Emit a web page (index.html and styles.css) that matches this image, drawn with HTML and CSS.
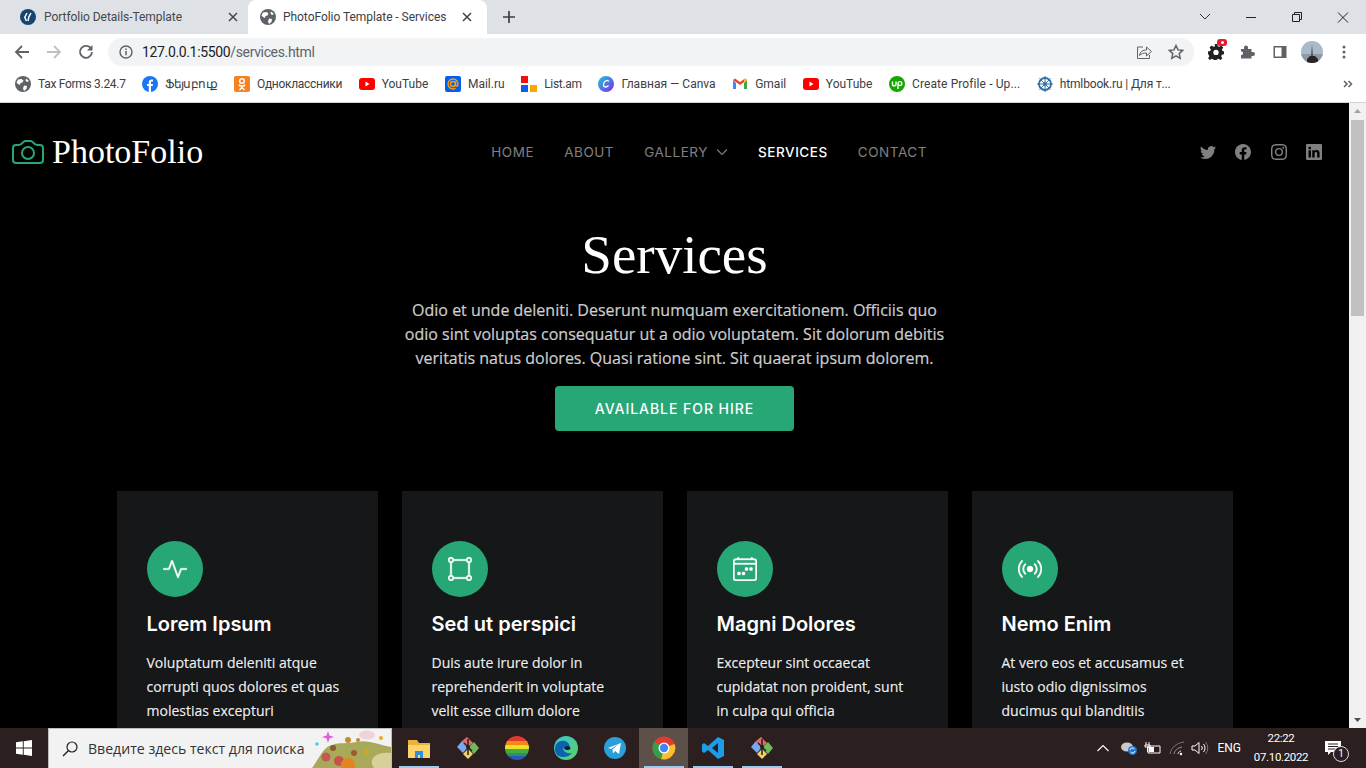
FILE: index.html
```html
<!DOCTYPE html>
<html lang="en">
<head>
<meta charset="utf-8">
<title>PhotoFolio Template - Services</title>
<link rel="stylesheet" href="styles.css">
</head>
<body>
<div class="screen">
  <div class="tabstrip">
    <div class="tab">
      <svg class="fav" viewBox="0 0 16 16"><circle cx="8" cy="8" r="8" fill="#14466f"/><path d="M7 4 4.800 8.200 6.400 12M11 4 8.800 8l-.8 4" fill="none" stroke="#fff" stroke-width="1.500"/></svg>
      <span class="tabtitle">Portfolio Details-Template</span>
      <svg class="tabx" viewBox="0 0 10 10"><path d="M1 1l8 8M9 1 1 9" stroke="#45474a" stroke-width="1.500"/></svg>
    </div>
    <div class="tab tab-active">
      <svg class="fav" viewBox="0 0 16 16"><circle cx="8" cy="8" r="8" fill="#5f6368"/><path d="M3 3.500 6.500 3l2 1.500-1 2-2 .5-.5 2L3 8 1.500 6.500zM9 9.500l3 .5-.5 3L9 15l-1-2.500zM11 2.500 14 5l-2 1-1.500-1.500z" fill="#fff"/></svg>
      <span class="tabtitle">PhotoFolio Template - Services</span>
      <svg class="tabx" viewBox="0 0 10 10"><path d="M1 1l8 8M9 1 1 9" stroke="#3c4043" stroke-width="1.500"/></svg>
    </div>
    <svg class="newtab" viewBox="0 0 12 12"><path d="M6 0v12M0 6h12" stroke="#3c4043" stroke-width="1.700"/></svg>
    <div class="winctrls">
      <svg class="winbtn" viewBox="0 0 46 14"><path d="M18 4l5 5 5-5" fill="none" stroke="#333" stroke-width="1"/></svg>
      <svg class="winbtn" viewBox="0 0 46 14"><path d="M18 7.500h10" stroke="#222" stroke-width="1"/></svg>
      <svg class="winbtn" viewBox="0 0 46 14"><path d="M18.500 4.500h7v7h-7zM20.500 4.500v-2h7v7h-2" fill="none" stroke="#222" stroke-width="1"/></svg>
      <svg class="winbtn" viewBox="0 0 46 14"><path d="M18 2.500l10 10M28 2.500l-10 10" stroke="#222" stroke-width="1"/></svg>
    </div>
  </div>

  <div class="toolbar">
    <svg class="tool" viewBox="0 0 16 16"><path d="M15 8H2M8 2 2 8l6 6" fill="none" stroke="#5f6368" stroke-width="1.800"/></svg>
    <svg class="tool" viewBox="0 0 16 16"><path d="M1 8h13M8 2l6 6-6 6" fill="none" stroke="#bdc1c6" stroke-width="1.800"/></svg>
    <svg class="tool" viewBox="0 0 16 16"><path d="M13.300 5A6 6 0 1 0 14 8" fill="none" stroke="#5f6368" stroke-width="1.800"/><path d="M14.500 1v5.500H9z" fill="#5f6368"/></svg>
    <div class="omnibox">
      <svg class="info" viewBox="0 0 14 14"><circle cx="7" cy="7" r="6" fill="none" stroke="#5f6368" stroke-width="1.400"/><path d="M7 6v4.200M7 3.500v1.500" stroke="#5f6368" stroke-width="1.500"/></svg>
      <span class="url"><span class="url-host">127.0.0.1:5500</span>/services.html</span>
      <svg class="omni-ic omni-share" viewBox="0 0 16 16"><path d="M7 3H1.500v11.500h12V11" fill="none" stroke="#5f6368" stroke-width="1"/><path d="M3.500 11.500C4 7.500 7 6 10.500 6V3l5 4.500-5 4.500V9C7.500 9 5.500 9.500 3.500 11.500Z" fill="#f1f3f4" stroke="#5f6368" stroke-width="1"/></svg>
      <svg class="omni-ic" viewBox="0 0 16 16"><path d="M8 1.500l2 4.400 4.800.5-3.600 3.200 1 4.700L8 11.900l-4.200 2.400 1-4.700L1.200 6.400 6 5.900z" fill="none" stroke="#5f6368" stroke-width="1.500"/></svg>
    </div>
    <div class="exts">
      <span class="ext">
        <svg class="ext-svg" viewBox="0 0 18 18"><path d="M7.500 0h3l.5 2.500 1.700.7L15 1.800l2.100 2.100-1.400 2.300.7 1.700L18 8.500v3l-2.500.5-.7 1.700 1.400 2.200-2.100 2.100-2.300-1.400-1.700.7-.5.700h-3l-.5-.7-1.700-.7-2.200 1.400L.1 15.900l1.400-2.200-.7-1.700L0 11.500v-3l2.500-.6.700-1.700L1.800 3.900 3.900 1.800l2.300 1.400 1.700-.7z" fill="#202124"/><circle cx="9" cy="9.500" r="3" fill="#fff"/></svg>
        <span class="ext-badge"><span class="ext-badge-dot"></span></span>
      </span>
      <svg class="ext-svg" viewBox="0 0 16 16"><path d="M1 6h3V4.500a2 2 0 0 1 4 0V6h3.500v3H13a2 2 0 0 1 0 4h-1.500v2.500H1V12h1a2 2 0 0 0 0-3.500H1z" fill="#5f6368" transform="translate(0 -1)"/></svg>
      <svg class="ext-svg" viewBox="0 0 16 16"><path d="M1.500 2h13v12h-13z" fill="#5f6368"/><path d="M3 3.500h6.500v9H3z" fill="#fff"/></svg>
      <svg class="avatar" viewBox="0 0 22 22"><defs><clipPath id="av"><circle cx="11" cy="11" r="11"/></clipPath></defs><g clip-path="url(#av)"><rect width="22" height="22" fill="#a9bac9"/><rect y="13" width="22" height="9" fill="#8d9aa5"/><path d="M11 3l1 12h-2z" fill="#555"/><path d="M6 22v-4l3-3h5l3 3v4z" fill="#2a2522"/></g></svg>
      <svg class="ext-svg" viewBox="0 0 16 16"><circle cx="8" cy="3" r="1.500" fill="#5f6368"/><circle cx="8" cy="8" r="1.500" fill="#5f6368"/><circle cx="8" cy="13" r="1.500" fill="#5f6368"/></svg>
    </div>
  </div>

  <div class="bookmarks">
    <a class="bm bm-tight"><svg class="fav" viewBox="0 0 16 16"><circle cx="8" cy="8" r="8" fill="#5f6368"/><path d="M3 3.500 6.500 3l2 1.500-1 2-2 .5-.5 2L3 8 1.500 6.500zM9 9.500l3 .5-.5 3L9 15l-1-2.500zM11 2.500 14 5l-2 1-1.500-1.500z" fill="#fff"/></svg>Tax Forms 3.24.7</a>
    <a class="bm bm-tighter"><svg class="fav" viewBox="0 0 16 16"><circle cx="8" cy="8" r="8" fill="#1a77f2"/><path d="M6.800 16V10H5V8h1.800V6.300C6.800 4.500 8 3.500 9.500 3.500c.7 0 1.500.1 1.500.1v1.800h-.9c-.9 0-1.100.5-1.100 1.100V8h2l-.3 2H9v6z" fill="#fff"/></svg>Ֆեյսբուք</a>
    <a class="bm bm-tight"><svg class="fav" viewBox="0 0 16 16"><rect width="16" height="16" rx="2" fill="#f58220"/><circle cx="8" cy="5" r="2.300" fill="none" stroke="#fff" stroke-width="1.500"/><path d="M4.800 9c2 1.300 4.400 1.300 6.400 0M8 10v1.500M5.500 14 8 11.500l2.500 2.500" fill="none" stroke="#fff" stroke-width="1.500"/></svg>Одноклассники</a>
    <a class="bm"><svg class="fav" viewBox="0 0 16 16"><rect y="2" width="16" height="12" rx="3" fill="#f00"/><path d="M6.500 5.500 10.500 8l-4 2.500z" fill="#fff"/></svg>YouTube</a>
    <a class="bm"><svg class="fav" viewBox="0 0 16 16"><rect width="16" height="16" rx="2" fill="#005ff9"/><circle cx="8" cy="8" r="2.500" fill="none" stroke="#ff9e00" stroke-width="1.400"/><path d="M10.500 5.500V9c0 1.700 2.500 1.700 2.500-.5A5 5 0 1 0 10.500 12.300" fill="none" stroke="#ff9e00" stroke-width="1.400"/></svg>Mail.ru</a>
    <a class="bm bm-tight"><svg class="fav" viewBox="0 0 16 16"><path d="M0 0h7v7H0z" fill="#f01010"/><path d="M0 9h7v7H0z" fill="#0e5bf0"/><path d="M9 9h7v7H9z" fill="#f9a800"/></svg>List.am</a>
    <a class="bm"><svg class="fav" viewBox="0 0 16 16"><defs><linearGradient id="cv" x1="0" y1="0" x2="1" y2="1"><stop offset="0" stop-color="#1fc8d8"/><stop offset="1" stop-color="#7d2ae8"/></linearGradient></defs><circle cx="8" cy="8" r="8" fill="url(#cv)"/><path d="M10.800 5.500C10 3.500 6 4.500 5.500 8.500c-.3 3 3 3.200 5 1" fill="none" stroke="#fff" stroke-width="1.300"/></svg>Главная — Canva</a>
    <a class="bm"><svg class="fav" viewBox="0 0 16 16"><path d="M1 4v9h3V7z" fill="#4285f4"/><path d="M12 7v6h3V4z" fill="#34a853"/><path d="M1 4l7 5 7-5-2-1.500L8 6 3 2.500z" fill="#ea4335"/><path d="M12 7l3-3-2-1.500-1 .7z" fill="#fbbc04"/></svg>Gmail</a>
    <a class="bm"><svg class="fav" viewBox="0 0 16 16"><rect y="2" width="16" height="12" rx="3" fill="#f00"/><path d="M6.500 5.500 10.500 8l-4 2.500z" fill="#fff"/></svg>YouTube</a>
    <a class="bm bm-wide"><svg class="fav" viewBox="0 0 16 16"><circle cx="8" cy="8" r="8" fill="#14a800"/><path d="M3.500 5.500V8c0 2.500 3.500 2.500 3.500 0V5.500M9 13V7.500c0-2.500 3.800-2.500 3.800 0s-3.800 2.500-3.800 0" fill="none" stroke="#fff" stroke-width="1.400"/></svg>Create Profile - Up...</a>
    <a class="bm bm-slight"><svg class="fav" viewBox="0 0 16 16"><circle cx="8" cy="8" r="6" fill="none" stroke="#2f6ea5" stroke-width="1.800"/><circle cx="8" cy="8" r="1.800" fill="#2f6ea5"/><path d="M8 0v16M0 8h16M2.500 2.500l11 11M13.500 2.500l-11 11" stroke="#2f6ea5" stroke-width="1"/></svg>htmlbook.ru | Для т...</a>
    <svg class="bm-more" viewBox="0 0 10 8"><path d="M1 1l3 3-3 3M5.500 1l3 3-3 3" fill="none" stroke="#5f6368" stroke-width="1.500"/></svg>
  </div>

  <div class="viewport">
    <main class="page">
      <header class="header">
        <a class="logo">
          <svg class="logo-icon" viewBox="0 0 16 16"><path d="M15 12a1 1 0 0 1-1 1H2a1 1 0 0 1-1-1V6a1 1 0 0 1 1-1h1.172a3 3 0 0 0 2.120-.879l.830-.828A1 1 0 0 1 6.827 3h2.344a1 1 0 0 1 .707.293l.828.828A3 3 0 0 0 12.828 5H14a1 1 0 0 1 1 1v6zM2 4a2 2 0 0 0-2 2v6a2 2 0 0 0 2 2h12a2 2 0 0 0 2-2V6a2 2 0 0 0-2-2h-1.172a2 2 0 0 1-1.414-.586l-.828-.828A2 2 0 0 0 9.172 2H6.828a2 2 0 0 0-1.414.586l-.828.828A2 2 0 0 1 3.172 4H2z"/><path d="M8 11a2.500 2.500 0 1 1 0-5 2.500 2.500 0 0 1 0 5zm0 1a3.500 3.500 0 1 0 0-7 3.500 3.500 0 0 0 0 7z"/></svg>
          <span class="logo-text">PhotoFolio</span>
        </a>
        <nav class="nav">
          <a class="nav-link">Home</a>
          <a class="nav-link">About</a>
          <a class="nav-link">Gallery <svg class="caret" viewBox="0 0 12 12"><path d="M1 3.500 6 8.500 11 3.500" fill="none" stroke="currentColor" stroke-width="1.100"/></svg></a>
          <a class="nav-link nav-active">Services</a>
          <a class="nav-link">Contact</a>
        </nav>
        <div class="social">
          <svg class="soc" viewBox="0 0 16 16"><path d="M5.026 15c6.038 0 9.341-5.003 9.341-9.334 0-.14 0-.282-.006-.422A6.685 6.685 0 0 0 16 3.542a6.658 6.658 0 0 1-1.889.518 3.301 3.301 0 0 0 1.447-1.817 6.533 6.533 0 0 1-2.087.793A3.286 3.286 0 0 0 7.875 6.030a9.325 9.325 0 0 1-6.767-3.429 3.289 3.289 0 0 0 1.018 4.382A3.323 3.323 0 0 1 .640 6.575v.045a3.288 3.288 0 0 0 2.632 3.218 3.203 3.203 0 0 1-.865.115 3.230 3.230 0 0 1-.614-.057 3.283 3.283 0 0 0 3.067 2.277A6.588 6.588 0 0 1 .780 13.580a6.320 6.320 0 0 1-.780-.045A9.344 9.344 0 0 0 5.026 15z"/></svg>
          <svg class="soc" viewBox="0 0 16 16"><path d="M16 8.049c0-4.446-3.582-8.050-8-8.050C3.580 0-.002 3.603-.002 8.050c0 4.017 2.926 7.347 6.750 7.951v-5.625h-2.030V8.050H6.750V6.275c0-2.017 1.195-3.131 3.022-3.131.876 0 1.791.157 1.791.157v1.980h-1.009c-.993 0-1.303.621-1.303 1.258v1.510h2.218l-.354 2.326H9.250V16c3.824-.604 6.750-3.934 6.750-7.951z"/></svg>
          <svg class="soc" viewBox="0 0 16 16"><path d="M8 0C5.829 0 5.556.01 4.703.048 3.850.088 3.269.222 2.760.420a3.917 3.917 0 0 0-1.417.923A3.927 3.927 0 0 0 .420 2.760C.222 3.268.087 3.850.048 4.700.010 5.555 0 5.827 0 8.001c0 2.172.010 2.444.048 3.297.040.852.174 1.433.372 1.942.205.526.478.972.923 1.417.444.445.890.719 1.416.923.510.198 1.090.333 1.942.372C5.555 15.990 5.827 16 8 16s2.444-.010 3.298-.048c.851-.040 1.434-.174 1.943-.372a3.916 3.916 0 0 0 1.416-.923c.445-.445.718-.891.923-1.417.197-.509.332-1.090.372-1.942C15.990 10.445 16 10.173 16 8s-.010-2.445-.048-3.299c-.040-.851-.175-1.433-.372-1.941a3.926 3.926 0 0 0-.923-1.417A3.911 3.911 0 0 0 13.240.420c-.510-.198-1.092-.333-1.943-.372C10.443.010 10.172 0 7.998 0h.003zm-.717 1.442h.718c2.136 0 2.389.007 3.232.046.780.035 1.204.166 1.486.275.373.145.640.319.920.599.280.280.453.546.598.920.110.281.240.705.275 1.485.039.843.047 1.096.047 3.231s-.008 2.389-.047 3.232c-.035.780-.166 1.203-.275 1.485a2.470 2.470 0 0 1-.599.919c-.280.280-.546.453-.920.598-.280.110-.704.240-1.485.276-.843.038-1.096.047-3.232.047s-2.390-.009-3.233-.047c-.780-.036-1.203-.166-1.485-.276a2.478 2.478 0 0 1-.920-.598 2.480 2.480 0 0 1-.600-.920c-.109-.281-.240-.705-.275-1.485-.038-.843-.046-1.096-.046-3.233 0-2.136.008-2.388.046-3.231.036-.780.166-1.204.276-1.486.145-.373.319-.640.599-.920.280-.280.546-.453.920-.598.282-.110.705-.240 1.485-.276.738-.034 1.024-.044 2.515-.045v.002zm4.988 1.328a.960.960 0 1 0 0 1.920.960.960 0 0 0 0-1.920zm-4.270 1.122a4.109 4.109 0 1 0 0 8.217 4.109 4.109 0 0 0 0-8.217zm0 1.441a2.667 2.667 0 1 1 0 5.334 2.667 2.667 0 0 1 0-5.334z"/></svg>
          <svg class="soc" viewBox="0 0 16 16"><path d="M0 1.146C0 .513.526 0 1.175 0h13.650C15.474 0 16 .513 16 1.146v13.708c0 .633-.526 1.146-1.175 1.146H1.175C.526 16 0 15.487 0 14.854V1.146zm4.943 12.248V6.169H2.542v7.225h2.401zm-1.200-8.212c.837 0 1.358-.554 1.358-1.248-.015-.709-.520-1.248-1.342-1.248-.822 0-1.359.540-1.359 1.248 0 .694.521 1.248 1.327 1.248h.016zm4.908 8.212V9.359c0-.216.016-.432.080-.586.173-.431.568-.878 1.232-.878.869 0 1.216.662 1.216 1.634v3.865h2.401V9.250c0-2.220-1.184-3.252-2.764-3.252-1.274 0-1.845.700-2.165 1.193v.025h-.016a5.540 5.540 0 0 1 .016-.025V6.169h-2.400c.030.678 0 7.225 0 7.225h2.400z"/></svg>
        </div>
      </header>

      <section class="hero">
        <h1 class="hero-title">Services</h1>
        <p class="hero-text">Odio et unde deleniti. Deserunt numquam exercitationem. Officiis quo odio sint voluptas consequatur ut a odio voluptatem. Sit dolorum debitis veritatis natus dolores. Quasi ratione sint. Sit quaerat ipsum dolorem.</p>
        <a class="hire">Available for hire</a>
      </section>

      <section class="cards">
        <article class="card">
          <div class="card-icon"><svg class="card-svg" viewBox="0 0 16 16"><path d="M6 2a.5.5 0 0 1 .47.33L10 12.036l1.530-4.208A.5.5 0 0 1 12 7.500h3.500a.5.5 0 0 1 0 1h-3.150l-1.880 5.170a.5.5 0 0 1-.940 0L6 3.964 4.470 8.171A.5.5 0 0 1 4 8.500H.5a.5.5 0 0 1 0-1h3.150l1.880-5.170A.5.5 0 0 1 6 2Z"/></svg></div>
          <h3 class="card-title">Lorem Ipsum</h3>
          <p class="card-text">Voluptatum deleniti atque corrupti quos dolores et quas molestias excepturi</p>
        </article>
        <article class="card">
          <div class="card-icon"><svg class="card-svg" viewBox="0 0 16 16"><path d="M2 1a1 1 0 1 0 0 2 1 1 0 0 0 0-2zM0 2a2 2 0 0 1 3.937-.5h8.126A2 2 0 1 1 14.500 3.937v8.126a2 2 0 1 1-2.437 2.437H3.937A2 2 0 1 1 1.500 12.063V3.937A2 2 0 0 1 0 2zm2.500 1.937v8.126c.703.180 1.256.734 1.437 1.437h8.126a2.004 2.004 0 0 1 1.437-1.437V3.937A2.004 2.004 0 0 1 12.063 2.500H3.937A2.004 2.004 0 0 1 2.500 3.937zM14 1a1 1 0 1 0 0 2 1 1 0 0 0 0-2zM2 13a1 1 0 1 0 0 2 1 1 0 0 0 0-2zm12 0a1 1 0 1 0 0 2 1 1 0 0 0 0-2z"/></svg></div>
          <h3 class="card-title">Sed ut perspici</h3>
          <p class="card-text">Duis aute irure dolor in reprehenderit in voluptate velit esse cillum dolore</p>
        </article>
        <article class="card">
          <div class="card-icon"><svg class="card-svg" viewBox="0 0 16 16"><path d="M3.500 0a.5.5 0 0 1 .5.5V1h8V.5a.5.5 0 0 1 1 0V1h1a2 2 0 0 1 2 2v11a2 2 0 0 1-2 2H2a2 2 0 0 1-2-2V3a2 2 0 0 1 2-2h1V.5a.5.5 0 0 1 .5-.5zM2 2a1 1 0 0 0-1 1v1h14V3a1 1 0 0 0-1-1H2zm13 3H1v9a1 1 0 0 0 1 1h12a1 1 0 0 0 1-1V5z"/><path d="M11 7.500a.5.5 0 0 1 .5-.5h1a.5.5 0 0 1 .5.5v1a.5.5 0 0 1-.5.5h-1a.5.5 0 0 1-.5-.5v-1zm-3 0a.5.5 0 0 1 .5-.5h1a.5.5 0 0 1 .5.5v1a.5.5 0 0 1-.5.5h-1a.5.5 0 0 1-.5-.5v-1zm-2 3a.5.5 0 0 1 .5-.5h1a.5.5 0 0 1 .5.5v1a.5.5 0 0 1-.5.5h-1a.5.5 0 0 1-.5-.5v-1zm-3 0a.5.5 0 0 1 .5-.5h1a.5.5 0 0 1 .5.5v1a.5.5 0 0 1-.5.5h-1a.5.5 0 0 1-.5-.5v-1z"/></svg></div>
          <h3 class="card-title">Magni Dolores</h3>
          <p class="card-text">Excepteur sint occaecat cupidatat non proident, sunt in culpa qui officia</p>
        </article>
        <article class="card">
          <div class="card-icon"><svg class="card-svg" viewBox="0 0 16 16"><path d="M3.050 3.050a7 7 0 0 0 0 9.900.5.5 0 0 1-.707.707 8 8 0 0 1 0-11.314.5.5 0 0 1 .707.707zm2.122 2.122a4 4 0 0 0 0 5.656.5.5 0 1 1-.708.708 5 5 0 0 1 0-7.072.5.5 0 0 1 .708.708zm5.656-.708a.5.5 0 0 1 .708 0 5 5 0 0 1 0 7.072.5.5 0 1 1-.708-.708 4 4 0 0 0 0-5.656.5.5 0 0 1 0-.708zm2.122-2.120a.5.5 0 0 1 .707 0 8 8 0 0 1 0 11.313.5.5 0 0 1-.707-.707 7 7 0 0 0 0-9.900.5.5 0 0 1 0-.707zM10 8a2 2 0 1 1-4 0 2 2 0 0 1 4 0z"/></svg></div>
          <h3 class="card-title">Nemo Enim</h3>
          <p class="card-text">At vero eos et accusamus et iusto odio dignissimos ducimus qui blanditiis</p>
        </article>
      </section>
    </main>
    <div class="scrollbar">
      <svg class="sb-btn" viewBox="0 0 17 17"><path d="M5 10l3.500-4 3.500 4z" fill="#a3a3a3"/></svg>
      <div class="sb-thumb"></div>
      <svg class="sb-btn" viewBox="0 0 17 17"><path d="M5 7l3.500 4 3.500-4z" fill="#505050"/></svg>
    </div>
  </div>

  <footer class="taskbar">
    <div class="start"><svg class="start-svg" viewBox="0 0 16 16"><path d="M0 2.300 6.800 1.300v6.300H0zM7.700 1.200 16 0v7.600H7.700zM0 8.400h6.800v6.300L0 13.700zM7.700 8.400H16V16l-8.300-1.200z" fill="#fff"/></svg></div>
    <div class="search">
      <svg class="search-svg" viewBox="0 0 16 16"><circle cx="10" cy="6" r="5" fill="none" stroke="#222" stroke-width="1.200"/><path d="M6.300 9.700 1 15" stroke="#222" stroke-width="1.400"/></svg>
      <span class="search-text">Введите здесь текст для поиска</span>
      <svg class="search-art" viewBox="0 0 79 39"><circle cx="5" cy="15" r="1.800" fill="#4fc7e6"/><path d="M16 2l1.500 4.500L22 8l-4.500 1.500L16 14l-1.500-4.500L10 8l4.500-1.500z" fill="#e15fd5"/><ellipse cx="55" cy="6" rx="8" ry="4.500" fill="#efd3d8"/><circle cx="69" cy="9" r="2" fill="#f3a51f"/><path d="M0 39C8 28 12 17 20 16c8-3 16-1 24-3 11-3 24 3 35 5v21z" fill="#a9a95a"/><path d="M79 24c-14-2-24 6-17 15h17z" fill="#d9cf9a"/><circle cx="36" cy="11" r="3" fill="#c98a2d"/><circle cx="46" cy="11" r="2" fill="#c98a2d"/><circle cx="21" cy="19" r="3" fill="#8a5a30"/><circle cx="42" cy="24" r="3" fill="#9e5b2c"/><circle cx="54" cy="23" r="3" fill="#c8a82d"/><circle cx="14" cy="28" r="4.500" fill="#bf5a55"/><circle cx="27" cy="32" r="5" fill="#c8524a"/><circle cx="36" cy="36" r="7" fill="#e0851f"/></svg>
    </div>
    <div class="apps">
      <div class="app app-on"><svg class="app-svg" viewBox="0 0 24 24"><path d="M1 4h9l2 3h11v4H1z" fill="#e9b33c"/><path d="M1 9h22v13H1z" fill="#fbd46b"/><path d="M8 15h8v7h-3v-3h-2v3H8z" fill="#2b8fe2"/></svg></div>
      <div class="app"><svg class="app-svg" viewBox="0 0 24 24"><path d="M12 11 6 5l5-4 6 6z" fill="#e46a6a"/><path d="M12 11 6 5 1 11l6 6z" fill="#7aa8ee"/><path d="M12 12l6-6 5 6-5 6z" fill="#74b85c"/><path d="M12 13l-5 5 5 5 5-5z" fill="#f2d36b"/><path d="M12 3v16M8 7l8 8" stroke="#222" stroke-width="1.500"/><circle cx="12" cy="11" r="2" fill="#222"/></svg></div>
      <div class="app"><svg class="app-svg" viewBox="0 0 24 24"><defs><clipPath id="rbc"><circle cx="12" cy="12" r="12"/></clipPath></defs><g clip-path="url(#rbc)"><rect width="24" height="5" fill="#e23b2e"/><rect y="5" width="24" height="4" fill="#f08a1d"/><rect y="9" width="24" height="4" fill="#f2de22"/><rect y="13" width="24" height="4" fill="#3fae45"/><rect y="17" width="24" height="3" fill="#2f8f6a"/><rect y="20" width="24" height="4" fill="#2a58b5"/></g></svg></div>
      <div class="app"><svg class="app-svg" viewBox="0 0 24 24"><defs><linearGradient id="ed" x1="0" y1="0" x2="1" y2="1"><stop offset="0" stop-color="#33c6d8"/><stop offset="1" stop-color="#5ed05f"/></linearGradient></defs><circle cx="12" cy="12" r="12" fill="url(#ed)"/><path d="M1 13C1 6 8 3 13 6c3 2 3 5 1 6H9c0 4 5 6 9 5-4 6-17 6-17-4z" fill="#0c62ad"/><path d="M10 13c.5-3 4-4 6-2 1 1 0 3-2 3-1 0-2 0-4-1z" fill="#10223a"/></svg></div>
      <div class="app"><svg class="app-svg" viewBox="0 0 24 24"><circle cx="12" cy="12" r="11" fill="#2a9fd8"/><path d="M5 12 18 7l-2 11-4-3-2 2.500-.5-4 6-5.500-7.500 5z" fill="#fff"/></svg></div>
      <div class="app app-active"><svg class="app-svg" viewBox="0 0 24 24"><circle cx="12" cy="12" r="11.500" fill="#e33b2e"/><path d="M12 12 22.500 8A11.500 11.500 0 0 1 9 23.100z" fill="#fbc02d"/><path d="M12 12 9 23.100A11.500 11.500 0 0 1 2.300 5.800z" fill="#2fa14b"/><circle cx="12" cy="12" r="5.500" fill="#fff"/><circle cx="12" cy="12" r="4.200" fill="#4285f4"/></svg></div>
      <div class="app app-on"><svg class="app-svg" viewBox="0 0 24 24"><path d="M17 1 23 4v16l-6 3L7 14l-4 3-2-1.500V8.500L3 7l4 3z" fill="#1e9ce8"/><path d="M17 7 11 12l6 5z" fill="#2c1f20"/></svg></div>
      <div class="app app-on"><svg class="app-svg" viewBox="0 0 24 24"><path d="M12 11 6 5l5-4 6 6z" fill="#e46a6a"/><path d="M12 11 6 5 1 11l6 6z" fill="#7aa8ee"/><path d="M12 12l6-6 5 6-5 6z" fill="#74b85c"/><path d="M12 13l-5 5 5 5 5-5z" fill="#f2d36b"/><path d="M12 3v16M8 7l8 8" stroke="#222" stroke-width="1.500"/><circle cx="12" cy="11" r="2" fill="#222"/></svg></div>
    </div>
    <div class="tray">
      <svg class="tray-ic tray-chev" viewBox="0 0 14 16"><path d="M1.500 11 7 5.500l5.500 5.500" fill="none" stroke="#fff" stroke-width="1.100"/></svg>
      <svg class="tray-ic tray-cloud" viewBox="0 0 18 16"><ellipse cx="7" cy="7" rx="6" ry="4.500" fill="#c9c9c9"/><circle cx="12.500" cy="10.500" r="4.500" fill="#1e78d2"/><path d="M10 10a2.500 2.500 0 0 1 4.500-1M15 11a2.500 2.500 0 0 1-4.500 1" fill="none" stroke="#fff" stroke-width="1"/></svg>
      <svg class="tray-ic tray-batt" viewBox="0 0 18 16"><path d="M4 6h12v7H4z" fill="none" stroke="#fff"/><path d="M5 7h5v5H5z" fill="#fff"/><path d="M2 2v3M5 2v3M1 5h5v2H1zM3.500 7v5" stroke="#fff" stroke-width="1" fill="none"/></svg>
      <svg class="tray-ic tray-wifi" viewBox="0 0 18 16"><path d="M1 14C2 8 7 3 15 2" fill="none" stroke="#777" stroke-width="1"/><path d="M5 14c.5-3 3-6 8-7" fill="none" stroke="#999" stroke-width="1"/><path d="M9 14c.5-1.500 1-2.500 3-3" fill="none" stroke="#ddd" stroke-width="1"/><circle cx="12" cy="14" r="1.200" fill="#fff"/></svg>
      <svg class="tray-ic tray-sound" viewBox="0 0 18 16"><path d="M1 6h3l4-3.500v11L4 10H1z" fill="none" stroke="#fff"/><path d="M10.500 6a3 3 0 0 1 0 4M12.500 4a6 6 0 0 1 0 8" fill="none" stroke="#fff"/><path d="M14.500 2a9 9 0 0 1 0 12" fill="none" stroke="#777"/></svg>
      <span class="tray-lang">ENG</span>
      <div class="clock"><span>22:22</span><span>07.10.2022</span></div>
      <div class="notif">
        <svg class="notif-svg" viewBox="0 0 18 16"><path d="M1 1h16v11H7l-3 3v-3H1z" fill="#fff"/><path d="M4 4h10M4 6.500h10M4 9h7" stroke="#2b1f20"/></svg>
        <span class="notif-badge">1</span>
      </div>
    </div>
  </footer>
</div>
</body>
</html>
```

FILE: styles.css
```css
* { box-sizing: border-box; }
html, body { margin: 0; padding: 0; height: 100%; overflow: hidden; }
.screen { width: 1366px; height: 768px; display: flex; flex-direction: column; overflow: hidden; background: #000; font-family: "Open Sans", "Liberation Sans", sans-serif; }
h1, h3, p { margin: 0; }

/* tab strip */
.tabstrip { height: 34px; flex: none; background: #dee1e6; display: flex; align-items: center; color: #3c4043; font-family: Roboto, sans-serif; font-size: 12px; }
.tab { width: 239px; height: 34px; padding: 0 8px 0 20px; display: flex; align-items: center; margin-left: 9px; flex: none; }
.tab:first-child { margin-left: 0; width: 248px; padding-left: 20px; padding-right: 10px; }
.tab-active { background: #fff; border-radius: 8px 8px 0 0; margin-left: 0; padding-left: 12px; padding-right: 15px; }
.fav { width: 16px; height: 16px; flex: none; }
.tabtitle { margin-left: 8px; flex: 1; white-space: nowrap; color: #45474a; letter-spacing: -.05px; }
.tab-active .tabtitle { margin-left: 7px; color: #3c4043; }
.tabx { width: 10px; height: 10px; flex: none; }
.newtab { width: 12px; height: 12px; margin-left: 16px; flex: none; }
.winctrls { margin-left: auto; display: flex; }
.winbtn { width: 46px; height: 14px; }

/* toolbar */
.toolbar { height: 36px; flex: none; background: #fff; display: flex; align-items: center; padding-left: 14px; }
.tool { width: 16px; height: 16px; margin-right: 16px; flex: none; }
.omnibox { width: 1086px; height: 28px; margin-left: -2px; background: #f1f3f4; border-radius: 14px; display: flex; align-items: center; padding: 0 10px 0 11px; flex: none; }
.info { width: 14px; height: 14px; flex: none; }
.url { margin-left: 9px; font-family: Roboto, sans-serif; font-size: 14px; letter-spacing: -.35px; color: #5f6368; flex: 1; }
.url-host { color: #202124; }
.omni-ic { width: 16px; height: 16px; flex: none; margin-left: 16px; }
.exts { display: flex; align-items: center; gap: 16px; margin-left: 14px; }
.ext { position: relative; display: block; width: 16px; height: 16px; }
.ext-svg { width: 16px; height: 16px; display: block; flex: none; }
.ext-badge { position: absolute; right: -3px; top: -5px; width: 10px; height: 7px; border-radius: 3px; background: #e8192c; display: flex; align-items: center; justify-content: center; }
.ext-badge-dot { width: 3px; height: 3px; border-radius: 50%; background: #fff; }
.avatar { width: 22px; height: 22px; margin: 0 -3px; flex: none; }

/* bookmarks */
.bookmarks { height: 33px; flex: none; background: #fff; border-bottom: 1px solid #d2d4d8; display: flex; align-items: center; padding: 0 15px 4px; font-family: Roboto, sans-serif; font-size: 12px; color: #3c4043; gap: 16.600px; }
.bm { display: flex; align-items: center; gap: 7px; white-space: nowrap; }
.bm-tight { letter-spacing: -.3px; }
.bm-tighter { letter-spacing: -.6px; }
.bm-slight { letter-spacing: -.15px; }
.bm-wide { letter-spacing: .1px; }
.bm-more { width: 10px; height: 8px; margin-left: auto; margin-right: -2px; }

/* page */
.viewport { flex: 1; min-height: 0; display: flex; }
.page { width: 1349px; flex: none; background: #000; color: #fff; overflow: hidden; }
.header { height: 98px; display: flex; align-items: center; justify-content: space-between; padding: 0 27px 0 12px; }
.logo { display: flex; align-items: center; gap: 8px; }
.logo-icon { width: 32px; height: 32px; fill: #27a776; display: block; }
.logo-text { font-family: "Liberation Serif", serif; font-size: 34px; line-height: 44px; color: #fff; }
.nav { display: flex; gap: 30px; padding-left: 15px; font-family: Inter, sans-serif; font-size: 13.500px; }
.nav-link { color: rgba(255, 255, 255, .5); text-transform: uppercase; letter-spacing: .55px; display: flex; align-items: center; gap: 8px; }
.nav-active { color: #fff; font-weight: 500; }
.caret { width: 12px; height: 12px; }
.social { display: flex; gap: 19.300px; }
.soc { width: 16px; height: 16px; fill: rgba(255, 255, 255, .5); display: block; }

.hero { display: flex; flex-direction: column; align-items: center; text-align: center; padding-top: 18px; }
.hero-title { font-family: "Liberation Serif", serif; font-weight: 400; font-size: 55px; line-height: 72px; }
.hero-text { width: 560px; margin-top: 7px; font-size: 16px; line-height: 24px; color: rgba(255, 255, 255, .78); -webkit-text-stroke: .2px rgba(255, 255, 255, .78); }
.hire { margin-top: 16px; width: 239px; height: 45px; display: flex; align-items: center; justify-content: center; background: #27a776; border-radius: 4px; font-family: Inter, sans-serif; font-weight: 500; font-size: 14px; letter-spacing: .95px; text-transform: uppercase; color: #fff; }

.cards { display: grid; grid-template-columns: repeat(4, 261px); gap: 24px; padding: 60px 116px 0 117px; }
.card { background: #161718; padding: 50px 30px 30px 29.500px; height: 300px; }
.card-icon { width: 56px; height: 56px; border-radius: 50%; background: #27a776; display: flex; align-items: center; justify-content: center; }
.card-svg { width: 24px; height: 24px; fill: #fff; stroke: #fff; stroke-width: .25; }
.card-title { margin-top: 14px; font-family: Inter, sans-serif; font-weight: 600; font-size: 20px; line-height: 26px; color: #fff; }
.card-text { margin-top: 14px; font-size: 14px; line-height: 24px; color: rgba(255, 255, 255, .92); -webkit-text-stroke: .2px rgba(255, 255, 255, .92); }

/* scrollbar */
.scrollbar { width: 17px; flex: none; background: #f1f1f1; display: flex; flex-direction: column; }
.sb-btn { width: 17px; height: 17px; flex: none; }
.sb-thumb { height: 196px; margin: 0 2px; background: #c1c1c1; flex: none; }
.sb-btn:last-child { margin-top: auto; }

/* taskbar */
.taskbar { height: 40px; flex: none; background: #2c1f20; display: flex; align-items: center; color: #fff; font-family: Roboto, sans-serif; }
.start { width: 48px; height: 40px; display: flex; align-items: center; justify-content: center; flex: none; }
.start-svg { width: 16px; height: 16px; }
.search { width: 344px; height: 40px; background: #f2f2f2; display: flex; align-items: center; position: relative; flex: none; border: 1px solid #bdbdbd; border-width: 1px 1px 0; }
.search-svg { width: 16px; height: 16px; margin-left: 13px; flex: none; }
.search-text { margin-left: 10px; font-family: "Open Sans", sans-serif; font-size: 14.100px; color: #333; white-space: nowrap; }
.search-art { position: absolute; right: 0; bottom: 0; width: 79px; height: 39px; }
.apps { display: flex; margin-left: 2px; }
.app { width: 49px; height: 40px; display: flex; align-items: center; justify-content: center; position: relative; }
.app-svg { width: 24px; height: 24px; }
.app-active { background: #5c5048; }
.app-on::after, .app-active::after { content: ""; position: absolute; left: 5px; right: 4px; bottom: 0; height: 2px; background: #99ccf2; }
.tray { margin-left: auto; display: flex; align-items: center; height: 40px; padding-right: 24px; }
.tray-ic { height: 16px; flex: none; }
.tray-chev { width: 14px; }
.tray-cloud { width: 18px; margin-left: 10px; }
.tray-batt { width: 18px; margin-left: 6px; }
.tray-wifi { width: 18px; margin-left: 7px; }
.tray-sound { width: 18px; margin-left: 4px; }
.tray-lang { font-size: 12px; margin-left: 8px; }
.clock { display: flex; flex-direction: column; align-items: center; font-size: 11.500px; letter-spacing: -.35px; line-height: 19px; margin-left: 12px; width: 56px; }
.notif { position: relative; width: 18px; height: 16px; margin-left: 15px; }
.notif-svg { width: 18px; height: 16px; display: block; }
.notif-badge { position: absolute; right: -7px; bottom: -6px; width: 16px; height: 16px; border-radius: 50%; border: 1px solid #ddd; background: #2c1f20; font-size: 10px; line-height: 14px; text-align: center; }
```
